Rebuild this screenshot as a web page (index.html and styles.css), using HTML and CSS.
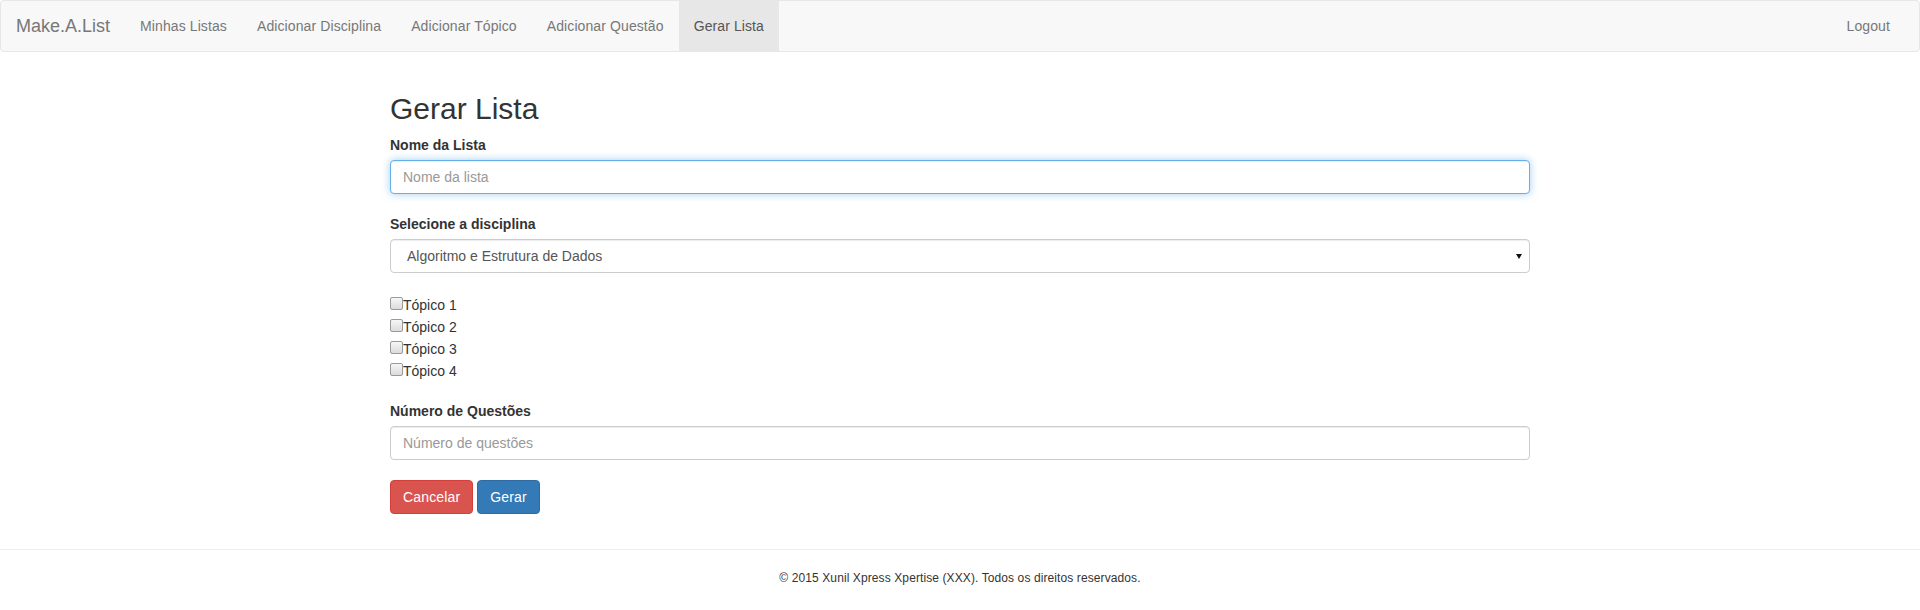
FILE: index.html
```html
<!DOCTYPE html>
<html lang="pt-BR">
<head>
<meta charset="utf-8">
<title>Make.A.List - Gerar Lista</title>
<link rel="stylesheet" href="styles.css">
</head>
<body>
<nav class="navbar">
  <div class="navbar-inner">
    <a class="brand" href="#">Make.A.List</a>
    <ul class="nav">
      <li><a href="#">Minhas Listas</a></li>
      <li><a href="#">Adicionar Disciplina</a></li>
      <li><a href="#">Adicionar Tópico</a></li>
      <li><a href="#">Adicionar Questão</a></li>
      <li class="active"><a href="#">Gerar Lista</a></li>
    </ul>
    <ul class="nav nav-right">
      <li><a href="#">Logout</a></li>
    </ul>
  </div>
</nav>

<main class="container">
  <h2 class="title">Gerar Lista</h2>
  <form class="form">
    <div class="form-group">
      <label class="control-label" for="nome">Nome da Lista</label>
      <input class="form-control is-focus" id="nome" type="text" placeholder="Nome da lista">
    </div>
    <div class="form-group">
      <label class="control-label" for="disc">Selecione a disciplina</label>
      <div class="select-wrap">
        <select class="form-control select" id="disc">
          <option>Algoritmo e Estrutura de Dados</option>
        </select>
      </div>
    </div>
    <div class="form-group checks">
      <label class="check"><input type="checkbox" class="cb"><span>Tópico 1</span></label>
      <label class="check"><input type="checkbox" class="cb"><span>Tópico 2</span></label>
      <label class="check"><input type="checkbox" class="cb"><span>Tópico 3</span></label>
      <label class="check"><input type="checkbox" class="cb"><span>Tópico 4</span></label>
    </div>
    <div class="form-group">
      <label class="control-label" for="num">Número de Questões</label>
      <input class="form-control" id="num" type="text" placeholder="Número de questões">
    </div>
    <div class="actions">
      <button type="button" class="btn btn-danger">Cancelar</button>
      <button type="button" class="btn btn-primary">Gerar</button>
    </div>
  </form>
</main>

<footer class="footer">
  <p>© 2015 Xunil Xpress Xpertise (XXX). Todos os direitos reservados.</p>
</footer>
</body>
</html>
```

FILE: styles.css
```css
* { box-sizing: border-box; }

html, body {
  margin: 0;
  padding: 0;
}

body {
  font-family: "Liberation Sans", Arial, Helvetica, sans-serif;
  font-size: 14px;
  line-height: 20px;
  color: #333;
  background: #fff;
}

a { text-decoration: none; }

/* Navbar */
.navbar {
  background: #f8f8f8;
  border: 1px solid #e7e7e7;
  border-radius: 4px;
  margin-bottom: 20px;
}

.navbar-inner {
  display: flex;
  align-items: stretch;
  min-height: 50px;
  padding-right: 14px;
}

.brand {
  display: block;
  padding: 15px;
  font-size: 18px;
  line-height: 20px;
  height: 50px;
  color: #777;
}

.nav {
  display: flex;
  list-style: none;
  margin: 0;
  padding: 0;
}

.nav li a {
  display: block;
  padding: 15px;
  line-height: 20px;
  color: #777;
  letter-spacing: 0.1px;
}

.nav li.active a {
  background: #e7e7e7;
  color: #555;
}

.nav-right {
  margin-left: auto;
}

/* Content */
.container {
  display: flow-root;
  width: 1140px;
  margin: 0 auto;
}

.title {
  font-size: 30px;
  font-weight: 500;
  line-height: 1.1;
  margin: 20px 0 10px;
  color: #333;
}

.form { margin: 0; }

.form-group {
  margin-bottom: 20px;
}

.control-label {
  display: block;
  font-weight: 700;
  margin-bottom: 5px;
  color: #333;
}

.form-control {
  display: block;
  width: 100%;
  height: 34px;
  padding: 6px 12px;
  font-family: inherit;
  font-size: 14px;
  line-height: 20px;
  color: #555;
  background: #fff;
  border: 1px solid #ccc;
  border-radius: 4px;
  box-shadow: inset 0 1px 1px rgba(0, 0, 0, .075);
  outline: none;
}

.form-control::placeholder {
  color: #999;
  opacity: 1;
}

.form-control.is-focus {
  border-color: #66afe9;
  box-shadow: inset 0 1px 1px rgba(0, 0, 0, .075), 0 0 8px rgba(102, 175, 233, .6);
}

.select-wrap {
  position: relative;
}

.select {
  -webkit-appearance: none;
  appearance: none;
  padding-left: 16px;
  color: #555;
}

.select-wrap::after {
  content: "";
  position: absolute;
  right: 8px;
  top: 15px;
  border-left: 3.5px solid transparent;
  border-right: 3.5px solid transparent;
  border-top: 5px solid #111;
  pointer-events: none;
}

/* Checkboxes */
.checks {
  display: flex;
  flex-direction: column;
}

.check {
  display: flex;
  align-items: flex-start;
  height: 22px;
  color: #333;
}

.cb {
  -webkit-appearance: none;
  appearance: none;
  width: 13px;
  height: 13px;
  margin: 4px 0 0 0;
  border: 1px solid #9a9a9a;
  border-radius: 2px;
  background: linear-gradient(#f6f6f6, #dcdcdc);
  flex: none;
}

.check span {
  margin-top: 2px;
  line-height: 20px;
}

/* Buttons */
.actions {
  display: flex;
  gap: 4px;
}

.btn {
  display: inline-block;
  padding: 6px 12px;
  font-family: inherit;
  font-size: 14px;
  line-height: 20px;
  letter-spacing: 0.15px;
  border: 1px solid transparent;
  border-radius: 4px;
  color: #fff;
  cursor: pointer;
}

.btn-danger {
  background: #d9534f;
  border-color: #d43f3a;
}

.btn-primary {
  background: #337ab7;
  border-color: #2e6da4;
}

/* Footer */
.footer {
  margin-top: 35px;
  border-top: 1px solid #eee;
  padding-top: 18px;
  text-align: center;
  font-size: 12px;
  color: #333;
  letter-spacing: 0.1px;
}

.footer p {
  margin: 0;
  line-height: 20px;
}
```
